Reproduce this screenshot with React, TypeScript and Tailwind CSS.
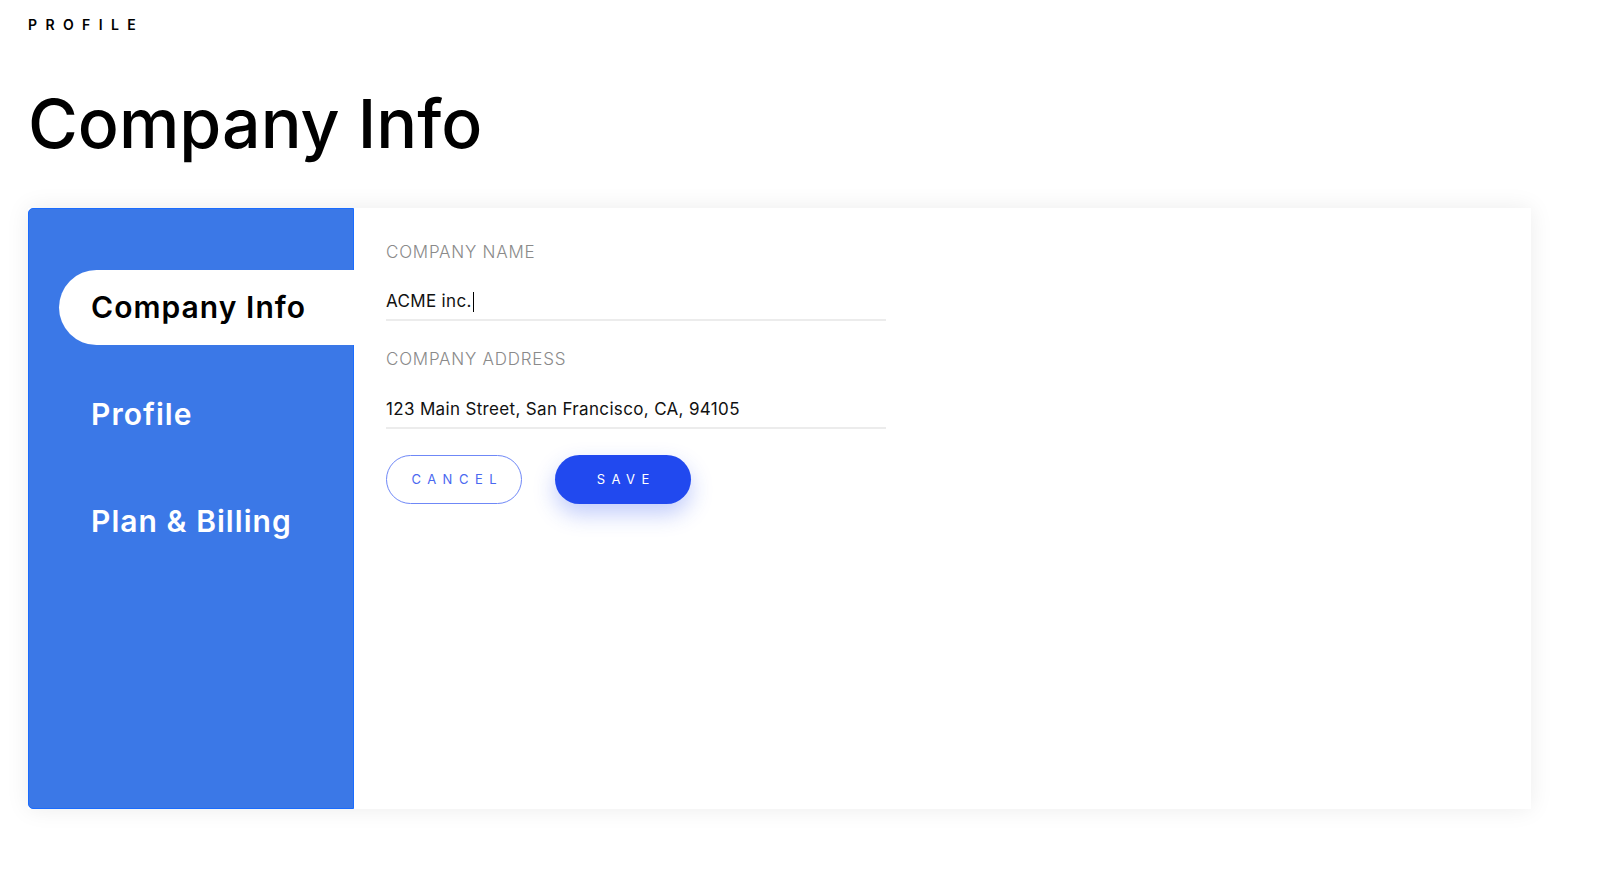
import React from 'react';

const navItems = ['Company Info', 'Profile', 'Plan & Billing'];

const Field: React.FC<{ label: string; value: string; caret?: boolean; first?: boolean }> = ({
  label,
  value,
  caret,
  first,
}) => (
  <div className={first ? '' : 'mt-[26px]'}>
    <div className="text-[17px] leading-[24px] font-light text-[#8a8a8a] tracking-[0.045em]">{label}</div>
    <div
      className={
        'h-[36px] w-[500px] border-b-2 border-[#ececec] flex items-center text-[17px] tracking-[0.02em] text-[#111] ' +
        (first ? 'mt-[21px]' : 'mt-[22px]')
      }
    >
      <span>{value}</span>
      {caret && <span className="ml-px inline-block h-[20px] w-px bg-black" />}
    </div>
  </div>
);

const App: React.FC = () => {
  const active = 'Company Info';

  return (
    <div className="min-h-screen bg-white pl-[28px] pt-[17px] font-['Inter',sans-serif] text-black">
      <p className="text-[14px] leading-[16px] font-semibold tracking-[0.6em]">PROFILE</p>
      <h1 className="mt-[55px] text-[68px] leading-[70px] font-medium">Company Info</h1>

      <div className="mt-[50px] flex h-[601px] w-[1503px] bg-white shadow-[0_0_22px_rgba(0,0,0,0.08)]">
        <aside className="w-[326px] shrink-0 rounded-l-[5px] border border-[#1a6cff] bg-[#3b78e7] pt-[61px] pl-[30px]">
          <nav className="flex flex-col gap-[32px]">
            {navItems.map((item) => (
              <div
                key={item}
                className={
                  'flex h-[75px] items-center pl-[32px] text-[30px] font-semibold tracking-[0.035em] ' +
                  (item === active ? '-mr-px rounded-l-full bg-white text-black' : 'text-white')
                }
              >
                {item}
              </div>
            ))}
          </nav>
        </aside>

        <section className="flex-1 pl-[32px] pt-[32px]">
          <Field first label="COMPANY NAME" value="ACME inc." caret />
          <Field label="COMPANY ADDRESS" value="123 Main Street, San Francisco, CA, 94105" />

          <div className="mt-[26px] flex gap-[33px]">
            <button className="h-[49px] w-[136px] rounded-full border border-[#6f88f7] bg-white pl-[0.5em] text-[13px] font-normal tracking-[0.5em] text-[#4a68f0]">
              CANCEL
            </button>
            <button className="h-[49px] w-[136px] rounded-full bg-[#2149ef] pl-[0.5em] text-[13px] font-normal tracking-[0.5em] text-white shadow-[0_10px_22px_rgba(33,73,239,0.28)]">
              SAVE
            </button>
          </div>
        </section>
      </div>
    </div>
  );
};

export default App;
